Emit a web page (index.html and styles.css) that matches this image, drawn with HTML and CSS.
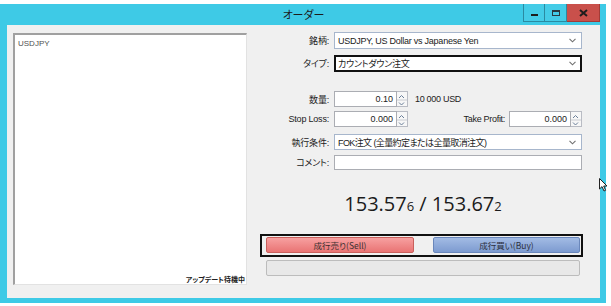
FILE: index.html
```html
<!DOCTYPE html>
<html lang="ja">
<head>
<meta charset="utf-8">
<title>オーダー</title>
<link rel="stylesheet" href="styles.css">
</head>
<body>
<div class="window">
  <div class="titlebar">
    <div class="title">オーダー</div>
    <div class="caption">
      <div class="cap-btn"><span class="min-glyph"></span></div>
      <div class="cap-btn"><span class="max-glyph"></span></div>
      <div class="cap-btn cap-close">
        <svg width="9" height="8" viewBox="0 0 9 8"><path d="M1 1 L8 7 M8 1 L1 7" stroke="#1d1d1d" stroke-width="2" fill="none"/></svg>
      </div>
    </div>
  </div>
  <div class="client">
    <div class="left-col">
      <div class="ticks">
        <div class="sym">USDJPY</div>
        <div class="status">アップデート待機中</div>
      </div>
    </div>
    <div class="right-col">
      <div class="row r1">
        <div class="lbl">銘柄:</div>
        <div class="select sel-sym">
          <span class="sel-text">USDJPY, US Dollar vs Japanese Yen</span>
          <svg class="chev" width="7" height="5" viewBox="0 0 7 5"><path d="M0.5 0.8 L3.5 3.8 L6.5 0.8" stroke="#707070" stroke-width="1.1" fill="none"/></svg>
        </div>
      </div>
      <div class="row r2">
        <div class="lbl">タイプ:</div>
        <div class="select sel-type">
          <span class="sel-text jp">カウントダウン注文</span>
          <svg class="chev" width="7" height="5" viewBox="0 0 7 5"><path d="M0.5 0.8 L3.5 3.8 L6.5 0.8" stroke="#707070" stroke-width="1.1" fill="none"/></svg>
        </div>
      </div>
      <div class="row r3">
        <div class="lbl">数量:</div>
        <div class="field">
          <div class="num w63">0.10</div>
          <div class="spin">
            <svg width="11" height="16" viewBox="0 0 11 16"><path d="M3 6 L5.5 3.5 L8 6" stroke="#6b7f99" stroke-width="1" fill="none"/><line x1="0" y1="8" x2="11" y2="8" stroke="#c9ccd2"/><path d="M3 10.5 L5.5 13 L8 10.5" stroke="#6b7f99" stroke-width="1" fill="none"/></svg>
          </div>
          <span class="unit">10 000 USD</span>
        </div>
      </div>
      <div class="row r4">
        <div class="lbl">Stop Loss:</div>
        <div class="field">
          <div class="num w63">0.000</div>
          <div class="spin">
            <svg width="11" height="16" viewBox="0 0 11 16"><path d="M3 6 L5.5 3.5 L8 6" stroke="#6b7f99" stroke-width="1" fill="none"/><line x1="0" y1="8" x2="11" y2="8" stroke="#c9ccd2"/><path d="M3 10.5 L5.5 13 L8 10.5" stroke="#6b7f99" stroke-width="1" fill="none"/></svg>
          </div>
          <span class="tp-lbl">Take Profit:</span>
          <div class="num w62">0.000</div>
          <div class="spin">
            <svg width="11" height="16" viewBox="0 0 11 16"><path d="M3 6 L5.5 3.5 L8 6" stroke="#6b7f99" stroke-width="1" fill="none"/><line x1="0" y1="8" x2="11" y2="8" stroke="#c9ccd2"/><path d="M3 10.5 L5.5 13 L8 10.5" stroke="#6b7f99" stroke-width="1" fill="none"/></svg>
          </div>
        </div>
      </div>
      <div class="row r5">
        <div class="lbl">執行条件:</div>
        <div class="select sel-fill">
          <span class="sel-text tight">FOK注文 (全量約定または全量取消注文)</span>
          <svg class="chev" width="7" height="5" viewBox="0 0 7 5"><path d="M0.5 0.8 L3.5 3.8 L6.5 0.8" stroke="#707070" stroke-width="1.1" fill="none"/></svg>
        </div>
      </div>
      <div class="row r6">
        <div class="lbl">コメント:</div>
        <div class="text-input"></div>
      </div>
      <div class="price">153.57<span class="pip">6</span> / 153.67<span class="pip">2</span></div>
      <div class="trade-box">
        <div class="btn sell">成行売り(Sell)</div>
        <div class="btn buy">成行買い(Buy)</div>
      </div>
      <div class="progress"></div>
    </div>
  </div>
</div>
<svg class="cursor" width="9" height="14" viewBox="0 0 9 14"><path d="M0.5 0.5 L0.5 11 L3 8.6 L5 13 L6.6 12.3 L4.7 8 L8 8 Z" fill="#fff" stroke="#222" stroke-width="1"/></svg>
</body>
</html>
```
FILE: styles.css
```css
* { box-sizing: border-box; }
html, body { margin: 0; padding: 0; background: #ffffff; }
body {
  width: 611px;
  height: 306px;
  overflow: hidden;
  position: relative;
  font-family: "Liberation Sans", "Noto Sans CJK JP", sans-serif;
  font-size: 9px;
  color: #1e1e1e;
  font-feature-settings: "palt";
}
.window {
  margin-top: 4px;
  width: 606px;
  height: 299px;
  background: #3ecae6;
  padding: 0 6px 5px 7px;
  display: flex;
  flex-direction: column;
}
.titlebar {
  height: 21px;
  display: grid;
  grid-template-columns: 1fr auto 1fr;
  align-items: start;
}
.title {
  grid-column: 2;
  line-height: 21px;
  font-family: "Noto Sans CJK JP", sans-serif;
  font-size: 11px;
  color: #1c1c1c;
}
.caption {
  grid-column: 3;
  justify-self: end;
  display: flex;
  height: 18px;
}
.cap-btn {
  width: 22px;
  height: 18px;
  border: 1px solid #2b8aa1;
  border-top: none;
  background: #44cce7;
  display: flex;
  align-items: center;
  justify-content: center;
}
.cap-btn + .cap-btn { border-left: none; }
.min-glyph {
  width: 7px;
  height: 2px;
  background: #1d1d1d;
  margin-top: 4px;
}
.max-glyph {
  width: 8px;
  height: 6px;
  border: 1px solid #2a3a40;
  border-top-width: 2px;
}
.cap-close {
  width: 33px;
  background: #c9504b;
  border-color: #a33b37;
}
.client {
  flex: 1;
  background: #f0f0f0;
  display: grid;
  grid-template-columns: 240px 1fr;
}
.left-col { padding: 8px 0 0 6px; }
.ticks {
  width: 234px;
  height: 252px;
  background: #ffffff;
  border-top: 2px solid #a0a0a0;
  border-left: 2px solid #a0a0a0;
  border-right: 1px solid #e2e2e2;
  border-bottom: 1px solid #e2e2e2;
  display: flex;
  flex-direction: column;
  justify-content: space-between;
  padding: 4px 1px 0 3px;
}
.sym { font-size: 8px; color: #505050; }
.status {
  align-self: flex-end;
  font-family: "Noto Sans CJK JP", sans-serif;
  font-size: 7px;
  font-weight: 700;
  color: #222;
  line-height: 10px;
}
.right-col { padding-top: 7px; }
.row { display: flex; align-items: center; }
.lbl {
  width: 87px;
  padding-right: 5px;
  text-align: right;
  white-space: nowrap;
  color: #222;
  letter-spacing: -0.2px;
}
.r1 { height: 17px; }
.r2 { height: 17px; margin-top: 6px; }
.r3 { height: 16px; margin-top: 19px; }
.r4 { height: 16px; margin-top: 4px; }
.r5 { height: 16px; margin-top: 7px; }
.r6 { height: 15px; margin-top: 5px; }
.select {
  width: 248px;
  height: 100%;
  background: #ffffff;
  border: 1px solid #a7b6cc;
  display: flex;
  align-items: center;
  justify-content: space-between;
  padding: 0 5px 0 3px;
}
.sel-type { border: 2px solid #111111; padding-left: 2px; padding-right: 4px; }
.sel-text { white-space: nowrap; letter-spacing: -0.25px; color: #1a1a1a; }
.sel-text.tight { letter-spacing: -0.6px; }
.field { display: flex; align-items: center; height: 100%; width: 248px; }
.num {
  height: 100%;
  background: #ffffff;
  border: 1px solid #abadb3;
  text-align: right;
  padding-right: 3px;
  line-height: 14px;
  color: #222;
}
.w63 { width: 63px; }
.w62 { width: 62px; }
.spin {
  width: 11px;
  height: 100%;
  border: 1px solid #b9bcc4;
  border-left: none;
  background: #f7f7f7;
  display: flex;
  overflow: hidden;
}
.spin svg { display: block; margin-left: -1px; }
.unit { margin-left: 7px; letter-spacing: -0.3px; color: #222; }
.tp-lbl { margin-left: auto; margin-right: 4px; letter-spacing: -0.3px; color: #222; }
.text-input {
  width: 248px;
  height: 100%;
  background: #ffffff;
  border: 1px solid #abadb3;
}
.price {
  margin-top: 22px;
  text-align: center;
  font-family: "Open Sans", sans-serif;
  font-size: 20px;
  line-height: 24px;
  color: #1b1b1b;
  padding-right: 1px;
}
.pip { font-size: 13px; }
.trade-box {
  margin-top: 16px;
  margin-left: 13px;
  width: 323px;
  height: 23px;
  border: 2px solid #111111;
  padding: 1px 1px 0 4px;
  display: flex;
  justify-content: space-between;
  align-items: flex-start;
}
.btn {
  height: 16px;
  border-radius: 2px;
  display: flex;
  align-items: center;
  justify-content: center;
  font-family: "Noto Sans CJK JP", sans-serif;
  font-size: 8.5px;
  color: #3a3030;
}
.sell {
  width: 148px;
  background: linear-gradient(#f7a0a0, #e97474);
  border: 1px solid #c9605c;
}
.buy {
  width: 147px;
  background: linear-gradient(#a2bbe4, #7d9bd0);
  border: 1px solid #6a87bb;
  color: #2c3040;
}
.progress {
  margin-top: 3px;
  margin-left: 19px;
  width: 314px;
  height: 16px;
  background: #e8e8e8;
  border: 1px solid #bcbcbc;
  border-radius: 2px;
}
.cursor { position: absolute; left: 599px; top: 178px; }
```
